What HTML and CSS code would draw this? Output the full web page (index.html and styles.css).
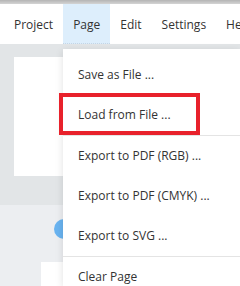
FILE: index.html
```html
<!DOCTYPE html>
<html>
<head>
    <title>Page menu</title>
<link rel="stylesheet" href="styles.css">
</head>
<body>
    <div class="top-strip"></div>
    <div class="menubar">
        <span class="menu-item">Project</span>
        <span class="menu-item active">Page</span>
        <span class="menu-item">Edit</span>
        <span class="menu-item">Settings</span>
        <span class="menu-item">Help</span>
    </div>
    <div class="workspace">
        <div class="panel">
            <div class="card"></div>
        </div>
        <div class="lower">
            <div class="dot"></div>
            <div class="card card-low"></div>
        </div>
    </div>

    <!-- dropdown for the "Page" menu -->
    <div class="dropdown">
        <div class="entry">Save as File ...</div>
        <div class="entry">Load from File ...</div>
        <div class="divider"></div>
        <div class="entry">Export to PDF (RGB) ...</div>
        <div class="entry">Export to PDF (CMYK) ...</div>
        <div class="entry">Export to SVG ...</div>
        <div class="divider"></div>
        <div class="entry">Clear Page</div>
    </div>
    <div class="highlight"></div>
</body>
</html>
```

FILE: styles.css
```css
body {
    margin: 0;
    width: 240px;
    height: 286px;
    overflow: hidden;
    position: relative;
    font-family: "Open Sans", Arial, sans-serif;
    font-size: 12px;
    color: #333;
    background-color: #eceef1;
}

.top-strip {
    height: 4px;
    background: linear-gradient(#b4b4b4, #d4d4d4);
}

.menubar {
    display: flex;
    height: 40px;
    padding-left: 4px;
    background-color: #fff;
    white-space: nowrap;
    overflow: hidden;
}

.menu-item {
    padding: 0 10px;
    line-height: 41px;
}

.menu-item.active {
    background-color: #ddeefc;
    box-sizing: border-box;
    border-bottom: 1px dotted #c5d6e6;
}

.workspace {
    display: flex;
    flex-direction: column;
}

.panel {
    height: 161px;
    padding: 13px 0 0 14px;
    box-sizing: border-box;
    background-color: #e2e5e7;
}

.card {
    height: 119px;
    background-color: #fff;
}

.lower {
    padding-top: 14px;
}

.dot {
    width: 20px;
    height: 20px;
    margin-left: 54px;
    border-radius: 50%;
    background-color: #69b3f0;
}

.card-low {
    margin: 23px 0 0 41px;
    height: 24px;
}

.dropdown {
    position: absolute;
    left: 63px;
    right: 0;
    top: 49px;
    bottom: 0;
    padding-top: 6px;
    overflow: hidden;
    background-color: #fff;
    box-shadow: 0 2px 8px rgba(0, 0, 0, 0.12);
}

.entry {
    height: 40px;
    line-height: 40px;
    padding-left: 15px;
    white-space: nowrap;
}

.divider {
    height: 1px;
    background-color: #e4e4e4;
}

.highlight {
    position: absolute;
    left: 59px;
    top: 93px;
    width: 141px;
    height: 42px;
    box-sizing: border-box;
    border: 4px solid #e8212b;
}
```
